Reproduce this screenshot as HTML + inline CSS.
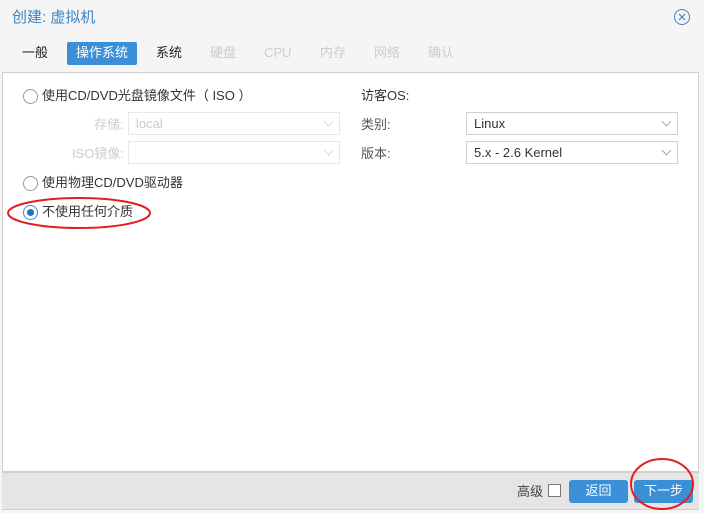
<!DOCTYPE html>
<html><head><meta charset="utf-8"><style>
*{box-sizing:border-box;margin:0;padding:0}
body{width:704px;height:513px;overflow:hidden;background:#f5f5f5;font-family:"Liberation Sans","Noto Sans CJK SC",sans-serif;font-size:13px;color:#333;position:relative}
.abs{position:absolute}
.t{line-height:15px}
.title{left:12px;top:9px;font-size:15px;color:#3a84c8;line-height:17px}
.close{left:674px;top:9px;width:16px;height:16px;border:1.2px solid #3a84c8;border-radius:50%}
.tab{top:45px;font-size:13px;color:#ccc;line-height:15px}
.body{left:2px;top:72px;width:697px;height:400px;background:#fff;border:1px solid #d0d0d0}
.footer{left:2px;top:472px;width:697px;height:38px;background:#e5e5e5;border-top:1px solid #d0d0d0;border-bottom:1px solid #d0d0d0}
.radio{width:15px;height:15px;border:1px solid #999;border-radius:50%;background:#fff}
.sel{border:1px solid #d0d0d0;background:#fff;height:23px;width:212px;line-height:15px}
.dis{border-color:#e8e8e8}
.chev{position:absolute;right:7px;top:5px;width:7px;height:7px;border-right:1px solid #aaa;border-bottom:1px solid #aaa;transform:rotate(45deg)}
.btn{top:480px;height:23px;background:#3b8fd6;color:#fff;border-radius:3px;text-align:center;line-height:22px;font-size:13px}
</style></head><body>
<div class="abs title">创建: 虚拟机</div>
<div class="abs close"><svg width="14" height="14" style="position:absolute;left:0;top:0"><path d="M4 4L10 10M10 4L4 10" stroke="#3a84c8" stroke-width="1.2"/></svg></div>
<div class="abs tab" style="left:22px;color:#222">一般</div>
<div class="abs" style="left:67px;top:42px;width:70px;height:23px;background:#3b8fd6;border-radius:2px;color:#fff;text-align:center;line-height:22px">操作系统</div>
<div class="abs tab" style="left:156px;color:#222">系统</div>
<div class="abs tab" style="left:210px">硬盘</div>
<div class="abs tab" style="left:264px">CPU</div>
<div class="abs tab" style="left:320px">内存</div>
<div class="abs tab" style="left:374px">网络</div>
<div class="abs tab" style="left:428px">确认</div>
<div class="abs body"></div>
<div class="abs radio" style="left:23px;top:89px"></div>
<div class="abs t" style="left:42px;top:88px">使用CD/DVD光盘镜像文件（ ISO ）</div>
<div class="abs t" style="left:94px;top:117px;color:#ccc">存储:</div>
<div class="abs sel dis" style="left:128px;top:112px"><span style="position:absolute;left:7px;top:3px;color:#ccc">local</span><div class="chev" style="border-color:#ddd"></div></div>
<div class="abs t" style="left:72px;top:146px;color:#ccc">ISO镜像:</div>
<div class="abs sel dis" style="left:128px;top:141px"><div class="chev" style="border-color:#ddd"></div></div>
<div class="abs radio" style="left:23px;top:176px"></div>
<div class="abs t" style="left:42px;top:175px">使用物理CD/DVD驱动器</div>
<div class="abs radio" style="left:23px;top:205px;border-color:#3b8fd6"><div style="position:absolute;left:3px;top:3px;width:7px;height:7px;border-radius:50%;background:#1e72c8"></div></div>
<div class="abs t" style="left:42px;top:204px">不使用任何介质</div>
<svg class="abs" style="left:5px;top:194px" width="150" height="38"><ellipse cx="74" cy="19" rx="71" ry="15" fill="none" stroke="#e02020" stroke-width="2"/></svg>
<div class="abs t" style="left:361px;top:88px">访客OS:</div>
<div class="abs t" style="left:361px;top:117px;color:#555">类别:</div>
<div class="abs sel" style="left:466px;top:112px"><span style="position:absolute;left:7px;top:3px">Linux</span><div class="chev"></div></div>
<div class="abs t" style="left:361px;top:146px;color:#555">版本:</div>
<div class="abs sel" style="left:466px;top:141px"><span style="position:absolute;left:7px;top:3px">5.x - 2.6 Kernel</span><div class="chev"></div></div>
<div class="abs footer"></div>
<div class="abs t" style="left:517px;top:484px;color:#444">高级</div>
<div class="abs" style="left:548px;top:484px;width:13px;height:13px;border:1px solid #777;background:#fff"></div>
<div class="abs btn" style="left:569px;width:59px">返回</div>
<div class="abs btn" style="left:634px;width:59px">下一步</div>
<svg class="abs" style="left:628px;top:456px" width="70" height="57"><ellipse cx="34" cy="28" rx="31" ry="25" fill="none" stroke="#e02020" stroke-width="2"/></svg>
</body></html>
